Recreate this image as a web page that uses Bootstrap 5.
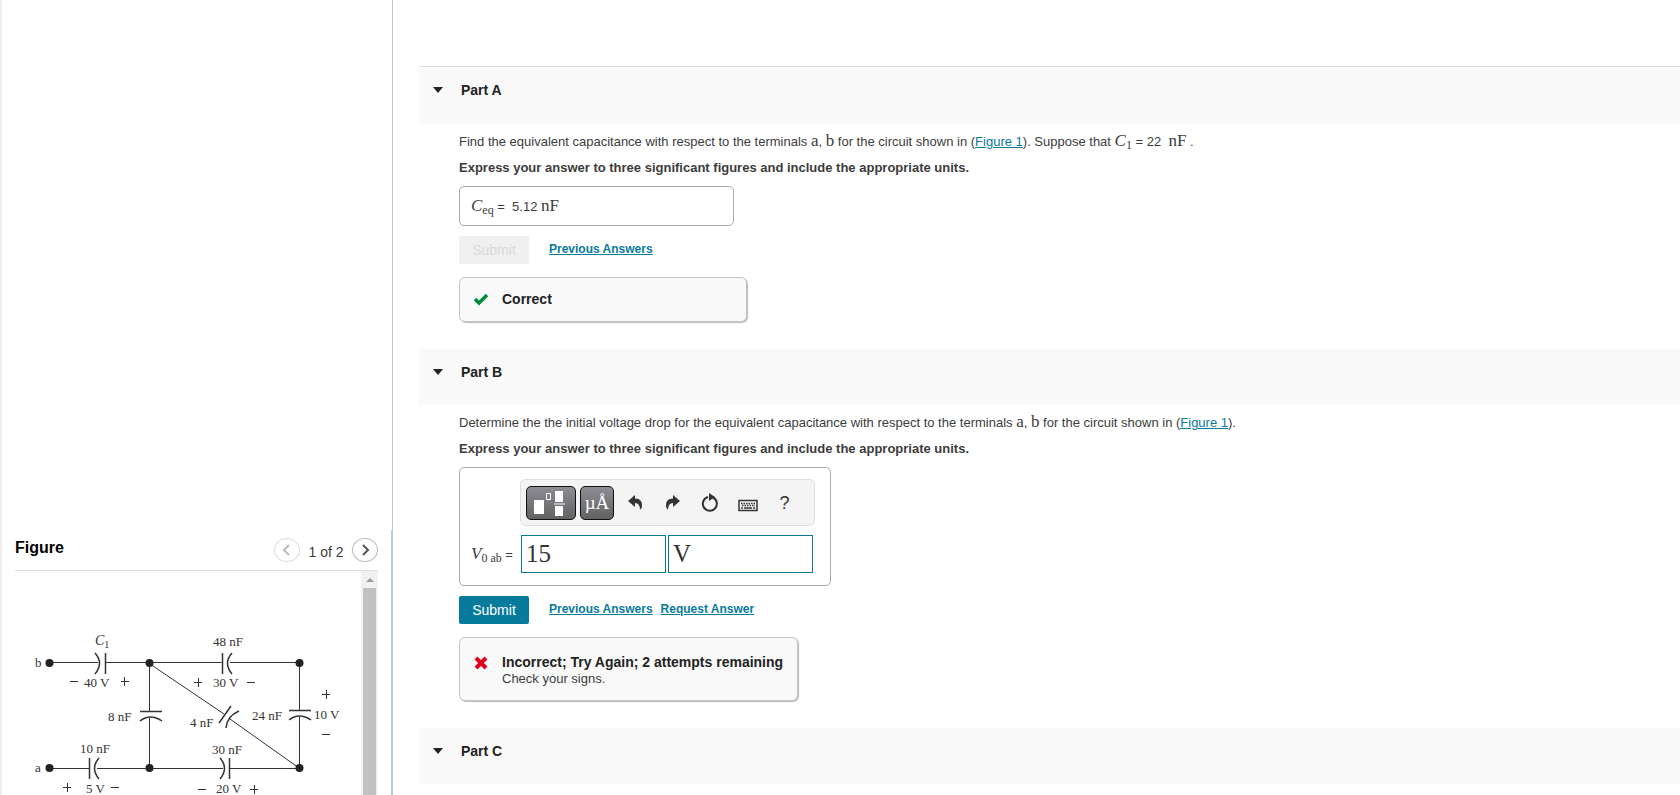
<!DOCTYPE html>
<html lang="en">
<head>
<meta charset="utf-8">
<meta name="viewport" content="width=device-width, initial-scale=1">
<title>Capacitor circuit</title>
<link href="https://cdn.jsdelivr.net/npm/bootstrap@5.3.0/dist/css/bootstrap.min.css" rel="stylesheet">
<script src="https://cdn.jsdelivr.net/npm/bootstrap@5.3.0/dist/js/bootstrap.bundle.min.js"></script>
<style>
body{font:13px/18px "Liberation Sans",Arial,sans-serif;color:#3c3c3c;background:#fff}
a{color:#077b9c}
.side{width:393px;border-left:2px solid #eee;display:grid;grid-template-rows:2fr 1fr}
.side-top{border-right:1px solid #b9cbdf}
.figure-pane{border-right:2px solid #b9cbdf;padding:0 13px}
.figure-head{height:41px;border-bottom:1px solid #ddd}
.figure-head h2{font-size:16px;line-height:20px;color:#000}
.page-btn{width:26px;height:24px;border:1px solid #bbb;border-radius:50%;background:#fff;color:#555}
.page-btn:disabled{border-color:#ddd;color:#bbb}
.page-count{width:52px;font-size:14px}
.scroll-track{width:17px;background:#f1f1f1}
.scroll-arrow{height:17px}
.scroll-thumb{width:13px;background:#c1c1c1}
.circuit text{font:13px "Liberation Serif",serif;fill:#333}
.main-col{padding:66px 0 0 26px}
.part-head{height:56px;background:#f9f9f9;padding:0 13px}
.part-head.first{height:58px;border-top:1px solid #ddd}
.part-head h2{font-size:14px;line-height:18px;color:#222}
.part-toggle{padding:14px 0 0;gap:17px}
.part-body{padding:8px 0 27px 40px}
.instruction{margin-bottom:9px}
.math{font-family:"Liberation Serif",serif;font-size:17px;line-height:18px}
.math sub{font-size:12px}
.answer{border:1px solid #aaa;border-radius:5px;width:275px;height:40px;padding:0 11px}
.entry{border:1px solid #aaa;border-radius:5px;width:372px;padding:11px 15px 12px 11px}
.entry-label{width:48px;white-space:nowrap}
.tools{width:295px;height:47px;border:1px solid #ddd;border-radius:6px;background:#f4f4f4;padding:0 5px;margin:0 0 9px 49px}
.tool-dark{width:34px;height:34px;border:1px solid #111;border-radius:5px;background:linear-gradient(#8d8d95,#626262);color:#fff;font:19px/32px "Liberation Serif",serif}
.tool-dark.wide{width:50px}
.tool-flat{width:37px;height:30px;border:0;background:none;color:#333}
.tool-help{font-size:18px}
.fields{gap:2px}
.field{width:145px;height:38px;border:1px solid #077b9c;border-radius:0;font:25px "Liberation Serif",serif;color:#333;padding:0 4px}
.actions{margin:10px 0 13px}
.submit-btn{width:70px;height:28px;border-radius:2px;font-size:14px;line-height:18px;background:#077b9c;color:#fff;margin-right:8px}
.submit-btn:disabled{background:#f0f0f0;color:#d9d9d9;opacity:1}
.aux{font-size:12px;font-weight:bold;line-height:26px}
.verdict{border:1px solid #c4c4c4;border-radius:6px;background:#f9f9f9;box-shadow:1px 1px 1px #bbb;padding:13px 8px 13px 14px;gap:14px}
.verdict.good{width:288px;height:45px}
.verdict.bad{width:339px;height:64px;padding-top:16px}
.verdict strong{display:block;font-size:14px;line-height:17px;color:#222}
.verdict svg{margin-top:2px}
.verdict div{line-height:15px}
</style>
</head>
<body>
<div class="d-flex min-vh-100">
<aside class="side vh-100 flex-shrink-0">
 <div class="side-top"></div>
 <section class="figure-pane d-flex flex-column overflow-hidden">
  <header class="figure-head d-flex align-items-center flex-shrink-0">
   <h2 class="fw-bold mb-1 me-auto">Figure</h2>
   <button class="page-btn p-0 d-flex align-items-center justify-content-center" disabled aria-label="Previous figure"><svg width="14" height="14" fill="none" stroke="currentColor" stroke-width="2"><path d="M9 2 4 7l5 5"/></svg></button>
   <span class="page-count text-center pt-1">1 of 2</span>
   <button class="page-btn p-0 d-flex align-items-center justify-content-center" aria-label="Next figure"><svg width="14" height="14" fill="none" stroke="currentColor" stroke-width="2"><path d="m5 2 5 5-5 5"/></svg></button>
  </header>
  <div class="d-flex flex-grow-1 overflow-hidden">
   <div class="flex-grow-1 overflow-hidden">
   <svg class="circuit" width="346" height="260" viewBox="15 571 346 260" role="img" aria-label="Circuit diagram">
    <g fill="none" stroke="#333">
     <path d="M50 662.500h48M106 662.500h115.500M230 662.500h69M149.500 663v48M149.500 718v50M299.500 663v47M299.500 717v51M50 768.500h39M97 768.500h126M230 768.500h69M150 664l74 50M230 719l69 49"/>
     <g stroke-width="1.500"><path d="M105.500 653v21M95 653q9 10 0 21M222.500 653v21M232 653q-9 10 0 21M89.500 758v21M99 758q-9 10 0 21M229.500 758v21M220 758q9 10 0 21M140 711.500h22M140 721q10-8 22 0M289 710.500h22M289 720q10-8 22 0M219 723l12-17M226 728q1-12 13-17"/></g>
    </g>
    <g fill="#222"><circle cx="49.500" cy="663" r="4"/><circle cx="149.500" cy="663" r="4"/><circle cx="299.500" cy="663" r="4"/><circle cx="49.500" cy="768" r="4"/><circle cx="149.500" cy="768" r="4"/><circle cx="299.500" cy="768" r="4"/></g>
    <text x="35" y="667">b</text><text x="35" y="772">a</text>
    <text x="95" y="645"><tspan style="font-size:14px;font-style:italic">C</tspan><tspan dy="3" style="font-size:10px">1</tspan></text>
    <text x="213" y="646">48 nF</text><text x="84" y="687">40 V</text><text x="213" y="687">30 V</text>
    <text x="108" y="721">8 nF</text><text x="190" y="727">4 nF</text><text x="252" y="720">24 nF</text><text x="314" y="719">10 V</text>
    <text x="80" y="753">10 nF</text><text x="212" y="754">30 nF</text><text x="86" y="793">5 V</text><text x="216" y="793">20 V</text>
    <path fill="none" stroke="#333" d="M70 681.500h8M121 681.500h8M124.500 677v9M194 682.500h8M198.500 678v9M247 682.500h8M322 694.500h8M326.500 690v9M322 734.500h8M63 787.500h8M67.500 783v9M111 787.500h8M198 789.500h8M250 789.500h8M254.500 785v9"/>
   </svg>
   </div>
   <div class="scroll-track d-flex flex-column align-items-center flex-shrink-0"><div class="scroll-arrow d-flex align-items-center"><svg width="8" height="4"><path d="M0 4 4 0l4 4z" fill="#999"/></svg></div><div class="scroll-thumb flex-grow-1"></div></div>
  </div>
 </section>
</aside>
<main class="main-col flex-grow-1 vh-100 overflow-hidden">
 <section>
  <header class="part-head first"><button class="btn part-toggle border-0 d-flex align-items-center"><svg width="12" height="7"><path d="M1 0h10L6 6z" fill="#222"/></svg><h2 class="fw-bold m-0">Part A</h2></button></header>
  <div class="part-body">
   <p class="mb-2">Find the equivalent capacitance with respect to the terminals <span class="math">a</span>, <span class="math">b</span> for the circuit shown in (<a href="#">Figure 1</a>). Suppose that <span class="math"><i>C</i><sub>1</sub></span> = 22 &nbsp;<span class="math">nF</span> .</p>
   <p class="instruction fw-bold">Express your answer to three significant figures and include the appropriate units.</p>
   <div class="answer d-flex align-items-center"><span><span class="math"><i>C</i><sub>eq</sub></span> = &nbsp;5.12 <span class="math">nF</span></span></div>
   <div class="actions d-flex gap-2"><button class="btn submit-btn p-0 border-0" disabled>Submit</button><a class="aux ms-1" href="#">Previous Answers</a></div>
   <div class="verdict good d-flex"><svg width="14" height="13"><path d="M1 6 5 10 13 2" fill="none" stroke="#00883c" stroke-width="3.500"/></svg><div><strong>Correct</strong></div></div>
  </div>
 </section>
 <section>
  <header class="part-head"><button class="btn part-toggle border-0 d-flex align-items-center"><svg width="12" height="7"><path d="M1 0h10L6 6z" fill="#222"/></svg><h2 class="fw-bold m-0">Part B</h2></button></header>
  <div class="part-body">
   <p class="mb-2">Determine the the initial voltage drop for the equivalent capacitance with respect to the terminals <span class="math">a</span>, <span class="math">b</span> for the circuit shown in (<a href="#">Figure 1</a>).</p>
   <p class="instruction fw-bold">Express your answer to three significant figures and include the appropriate units.</p>
   <div class="entry">
    <div class="tools d-flex align-items-center">
     <button class="tool-dark wide p-0 me-1 d-flex align-items-center justify-content-center" aria-label="Templates"><svg width="36" height="28" fill="#fff"><path d="M1 11h10v14H1zM22 2h8v11h-8zM22 17h8v10h-8zM21 14.500h11v1H21z"/><path d="M13.500 4.500h4v6h-4z" fill="none" stroke="#fff"/></svg></button>
     <button class="tool-dark p-0 me-1" aria-label="Units">µÅ</button>
     <button class="tool-flat p-0" aria-label="Undo"><svg width="18" height="16"><path d="M7 0v3.500q8 0 7 8.500l-2 3q0-7-5-7v4L0 6z" fill="currentColor"/></svg></button>
     <button class="tool-flat p-0" aria-label="Redo"><svg width="18" height="16"><path d="M8 0v3.500q-8 0-7 8.500l2 3q0-7 5-7v4l7-6z" fill="currentColor"/></svg></button>
     <button class="tool-flat p-0" aria-label="Reset"><svg width="20" height="20"><path d="M12 4.500a7 7 0 1 1-5-.500" fill="none" stroke="currentColor" stroke-width="2"/><path d="m8 0 6 4-6 4z" fill="currentColor"/></svg></button>
     <button class="tool-flat p-0 pt-1" aria-label="Keyboard"><svg width="20" height="13"><path d="M1 1.500h18v10H1z" fill="none" stroke="currentColor" stroke-width="1.500"/><path d="M3 4.500h14M4 6.500h13" stroke="currentColor" stroke-width="1.500" stroke-dasharray="1.500 1"/><path d="M3 9h2M6 9h8M15 9h2" stroke="currentColor" stroke-width="1.500"/></svg></button>
     <button class="tool-flat tool-help p-0" aria-label="Help">?</button>
    </div>
    <div class="fields d-flex align-items-center">
     <label class="entry-label" for="v0"><span class="math"><i>V</i><sub>0 ab</sub></span> =</label>
     <input class="field" id="v0" value="15"><input class="field" aria-label="Units" value="V">
    </div>
   </div>
   <div class="actions d-flex gap-2"><button class="btn submit-btn p-0 border-0">Submit</button><a class="aux ms-1" href="#">Previous Answers</a><a class="aux" href="#">Request Answer</a></div>
   <div class="verdict bad d-flex"><svg width="14" height="14"><path d="m2 2 10 10M12 2 2 12" fill="none" stroke="#e0001f" stroke-width="4"/></svg><div><strong>Incorrect; Try Again; 2 attempts remaining</strong>Check your signs.</div></div>
  </div>
 </section>
 <section>
  <header class="part-head"><button class="btn part-toggle border-0 d-flex align-items-center"><svg width="12" height="7"><path d="M1 0h10L6 6z" fill="#222"/></svg><h2 class="fw-bold m-0">Part C</h2></button></header>
 </section>
</main>
</div>
</body>
</html>
